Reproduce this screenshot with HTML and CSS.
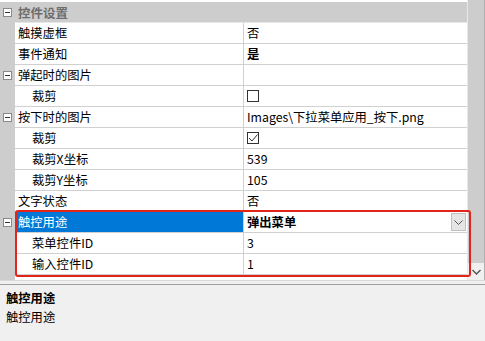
FILE: index.html
```html
<!DOCTYPE html>
<html lang="zh-CN">
<head>
    <meta charset="UTF-8">
    <title>属性</title>
    <link rel="stylesheet" href="styles.css">
</head>
<body>
    <div class="panel">
        <div class="grid-area">
            <div class="rows">
                <!-- category -->
                <div class="row category">
                    <span class="margin"><span class="toggle"></span></span>
                    <span class="cat-name">控件设置</span>
                </div>
                <div class="row">
                    <span class="margin"></span>
                    <span class="name">触摸虚框</span>
                    <span class="value">否</span>
                </div>
                <div class="row">
                    <span class="margin"></span>
                    <span class="name">事件通知</span>
                    <span class="value bold">是</span>
                </div>
                <div class="row">
                    <span class="margin"><span class="toggle"></span></span>
                    <span class="name">弹起时的图片</span>
                    <span class="value"></span>
                </div>
                <div class="row">
                    <span class="margin"></span>
                    <span class="name sub">裁剪</span>
                    <span class="value"><span class="check"></span></span>
                </div>
                <div class="row">
                    <span class="margin"><span class="toggle"></span></span>
                    <span class="name">按下时的图片</span>
                    <span class="value">Images\下拉菜单应用_按下.png</span>
                </div>
                <div class="row">
                    <span class="margin"></span>
                    <span class="name sub">裁剪</span>
                    <span class="value">
                        <span class="check">
                            <svg width="10" height="10" viewBox="0 0 10 10"><path d="M1 5 L4 8 L9.5 1.5" fill="none" stroke="#333" stroke-width="1"/></svg>
                        </span>
                    </span>
                </div>
                <div class="row">
                    <span class="margin"></span>
                    <span class="name sub">裁剪X坐标</span>
                    <span class="value">539</span>
                </div>
                <div class="row">
                    <span class="margin"></span>
                    <span class="name sub">裁剪Y坐标</span>
                    <span class="value">105</span>
                </div>
                <div class="row">
                    <span class="margin"></span>
                    <span class="name">文字状态</span>
                    <span class="value">否</span>
                </div>
                <div class="row selected">
                    <span class="margin"><span class="toggle"></span></span>
                    <span class="name">触控用途</span>
                    <span class="value bold">弹出菜单
                        <span class="drop">
                            <svg width="9" height="5" viewBox="0 0 9 5"><path d="M0.5 0.5 L4.5 4.5 L8.5 0.5" fill="none" stroke="#555" stroke-width="1"/></svg>
                        </span>
                    </span>
                </div>
                <div class="row">
                    <span class="margin"></span>
                    <span class="name sub">菜单控件ID</span>
                    <span class="value">3</span>
                </div>
                <div class="row">
                    <span class="margin"></span>
                    <span class="name sub">输入控件ID</span>
                    <span class="value">1</span>
                </div>
                <div class="rows-end"></div>
            </div>
            <div class="scrollbar">
                <div class="thumb"></div>
                <div class="arrow">
                    <svg width="9" height="6" viewBox="0 0 9 6"><path d="M0.5 1 L4.5 5 L8.5 1" fill="none" stroke="#555" stroke-width="1.4"/></svg>
                </div>
            </div>
        </div>

        <div class="splitter"></div>

        <div class="desc">
            <div class="desc-title">触控用途</div>
            <div class="desc-text">触控用途</div>
        </div>

        <!-- red annotation box -->
        <div class="highlight"></div>
    </div>
</body>
</html>
```

FILE: styles.css
```css
/* Property grid */
body {
    margin: 0;
    background-color: #f0f0f0;
    font-family: "Noto Sans CJK SC", "Noto Sans", sans-serif;
    font-size: 12.3px;
    color: #000;
}
.panel {
    position: relative;
    width: 485px;
    height: 341px;
    overflow: hidden;
}
.grid-area {
    display: flex;
    height: 280px;
    background-color: #fff;
}
.rows {
    width: 467px;
    padding-top: 2px;
    background-color: #fff;
    display: flex;
    flex-direction: column;
}
.row {
    display: grid;
    grid-template-columns: 15px 229px 1fr;
    height: 21px;
}
.margin {
    background-color: #cdcdcd;
    display: flex;
    align-items: center;
    padding-left: 3px;
}
.toggle {
    width: 7px;
    height: 7px;
    border: 1px solid #8a8a8a;
    background-color: #fff;
    position: relative;
}
.toggle::after {
    content: "";
    position: absolute;
    left: 1px;
    right: 1px;
    top: 3px;
    height: 1px;
    background-color: #333;
}
.name, .value {
    display: flex;
    align-items: center;
    border-bottom: 1px solid #d0d0d0;
    white-space: nowrap;
    line-height: 20px;
}
.name {
    padding-left: 3px;
    border-right: 1px solid #d0d0d0;
}
.name.sub {
    padding-left: 17px;
}
.value {
    padding-left: 3px;
}
.bold {
    font-weight: bold;
}
.category .cat-name {
    grid-column: 2 / 4;
    background-color: #cdcdcd;
    color: #6d6d6d;
    font-weight: bold;
    padding-left: 3px;
    display: flex;
    align-items: center;
    border-bottom: 1px solid #e6e6e6;
    font-size: 12.5px;
}
.check {
    width: 12px;
    height: 12px;
    border: 1px solid #333;
    box-sizing: border-box;
    display: flex;
    align-items: center;
    justify-content: center;
}
.selected .name {
    background-color: #0078d7;
    color: #fff;
}
.selected .value {
    position: relative;
}
.drop {
    position: absolute;
    right: 1px;
    top: 1px;
    width: 15px;
    height: 18px;
    background-color: #e5e5e5;
    border: 1px solid #c0c0c0;
    box-sizing: border-box;
    display: flex;
    align-items: center;
    justify-content: center;
}
.rows-end {
    flex: 1;
    display: flex;
}
.rows-end::before {
    content: "";
    width: 15px;
    background-color: #cdcdcd;
}
.scrollbar {
    width: 16px;
    border-left: 1px solid #e8e8e8;
    border-right: 1px solid #b0b0b0;
    background-color: #f0f0f0;
    display: flex;
    flex-direction: column;
}
.thumb {
    height: 263px;
    background-color: #cdcdcd;
}
.arrow {
    flex: 1;
    display: flex;
    align-items: center;
    justify-content: center;
}
.splitter {
    height: 3px;
    border-top: 1px solid #dadada;
    border-bottom: 1px solid #a0a0a0;
}
.desc {
    padding: 4px 6px;
}
.desc-title {
    font-weight: bold;
    line-height: 18px;
}
.desc-text {
    line-height: 20px;
}
.highlight {
    position: absolute;
    left: 15px;
    top: 210px;
    width: 456px;
    height: 67px;
    border: 2.5px solid #e3241b;
    border-radius: 3px;
    box-sizing: border-box;
}
```
